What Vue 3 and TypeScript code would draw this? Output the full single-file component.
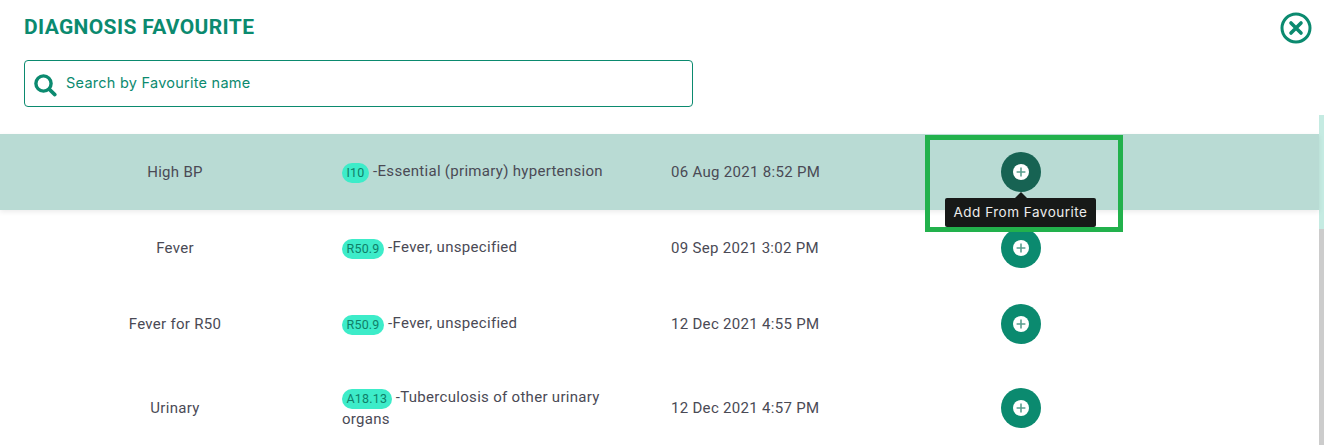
<template>
  <div class="dialog">
    <header class="head">
      <h2 class="title">DIAGNOSIS FAVOURITE</h2>
      <button class="close" aria-label="Close">
        <svg width="32" height="32" viewBox="0 0 32 32">
          <circle cx="16" cy="16" r="14" fill="none" stroke="#0b8a6f" stroke-width="3" />
          <path d="M11 11l10 10M21 11L11 21" fill="none" stroke="#0b8a6f" stroke-width="3.6" stroke-linecap="round" />
        </svg>
      </button>
    </header>

    <div class="search">
      <svg class="search-icon" width="24" height="24" viewBox="0 0 24 24">
        <circle cx="10.5" cy="10.5" r="7.6" fill="none" stroke="#0b8a6f" stroke-width="3.4" />
        <path d="M16.4 16.4l5.4 5.2" fill="none" stroke="#0b8a6f" stroke-width="3.6" stroke-linecap="round" />
      </svg>
      <span class="placeholder">Search by Favourite name</span>
    </div>

    <div class="body">
      <div class="list">
        <div
          v-for="(row, index) in rows"
          :key="row.name"
          class="row"
          :class="{ active: index === 0, tall: row.tall }"
        >
          <div class="name">{{ row.name }}</div>
          <div class="diag"><span class="code">{{ row.code }}</span> -{{ row.text }}</div>
          <div class="date">{{ row.date }}</div>
          <div class="action">
            <button class="add" aria-label="Add">
              <svg width="16" height="16" viewBox="0 0 16 16">
                <circle cx="8" cy="8" r="8" fill="#fff" />
                <path d="M8 3.6v8.8M3.6 8h8.8" stroke="#5a9f8f" stroke-width="1.6" />
              </svg>
            </button>
            <div v-if="index === 0" class="tooltip">Add From Favourite</div>
            <div v-if="index === 0" class="marker"></div>
          </div>
        </div>
      </div>
      <div class="scrollbar"><div class="thumb"></div></div>
    </div>
  </div>
</template>

<script setup lang="ts">
interface Row {
  name: string
  code: string
  text: string
  date: string
  tall?: boolean
}

const rows: Row[] = [
  { name: 'High BP', code: 'I10', text: 'Essential (primary) hypertension', date: '06 Aug 2021 8:52 PM' },
  { name: 'Fever', code: 'R50.9', text: 'Fever, unspecified', date: '09 Sep 2021 3:02 PM' },
  { name: 'Fever for R50', code: 'R50.9', text: 'Fever, unspecified', date: '12 Dec 2021 4:55 PM' },
  { name: 'Urinary', code: 'A18.13', text: 'Tuberculosis of other urinary organs', date: '12 Dec 2021 4:57 PM', tall: true }
]
</script>

<style>
html, body {
  margin: 0;
  background: #fff;
  overflow: hidden;
}
</style>

<style scoped>
.dialog {
  width: 1331px;
  height: 445px;
  overflow: hidden;
  font-family: Roboto, "Liberation Sans", sans-serif;
  color: #4a4a55;
}
.head {
  display: flex;
  justify-content: space-between;
  align-items: flex-start;
  height: 60px;
  padding: 12px 19px 0 24px;
  box-sizing: border-box;
}
.title {
  margin: 3px 0 0;
  font-size: 21px;
  line-height: 24px;
  font-weight: 700;
  color: #0b8a6f;
  letter-spacing: 0.35px;
}
.close {
  padding: 0;
  border: 0;
  background: none;
  display: block;
  height: 32px;
}
.search {
  display: flex;
  align-items: center;
  gap: 9px;
  width: 669px;
  height: 47px;
  margin-left: 24px;
  padding: 0 0 3px 8px;
  box-sizing: border-box;
  border: 1px solid #0b8a6f;
  border-radius: 4px;
}
.search-icon {
  margin-top: 6px;
}
.placeholder {
  font-family: Inter, "Open Sans", sans-serif;
  font-size: 14.5px;
  color: #0b8a6f;
  letter-spacing: 0.25px;
}
.body {
  display: flex;
  margin-top: 8px;
  padding-right: 7px;
  height: 330px;
}
.list {
  flex: 1;
  padding-top: 19px;
}
.row {
  display: grid;
  grid-template-columns: 342px 329px 250px 200px;
  align-items: center;
  height: 76px;
  font-size: 15px;
  line-height: 21px;
  letter-spacing: 0.3px;
}
.row.tall {
  height: 92px;
}
.row.active {
  background: #b9dbd4;
  box-shadow: 0 2px 5px rgba(0, 0, 0, 0.08);
  position: relative;
  z-index: 1;
}
.name,
.date {
  padding-top: 1px;
}
.name {
  text-align: center;
  padding-left: 8px;
}
.diag {
  padding-right: 40px;
}
.code {
  display: inline-block;
  padding: 0 4.5px;
  border-radius: 10px;
  background: #3decc9;
  color: #0f7f68;
  font-size: 12.5px;
  line-height: 20px;
  letter-spacing: 0.2px;
  vertical-align: -1px;
}
.action {
  position: relative;
  display: flex;
  justify-content: center;
}
.add {
  display: flex;
  align-items: center;
  justify-content: center;
  width: 40px;
  height: 40px;
  padding: 0;
  border: 0;
  border-radius: 50%;
  background: #0b8a6f;
}
.active .add {
  background: #176353;
}
.tooltip {
  position: absolute;
  top: 46px;
  left: 24px;
  width: 151px;
  height: 29px;
  border-radius: 2px;
  background: #171918;
  color: #ececec;
  font-family: Inter, "Open Sans", sans-serif;
  font-size: 13.5px;
  line-height: 29px;
  text-align: center;
  letter-spacing: 0.5px;
}
.tooltip::before {
  content: "";
  position: absolute;
  top: -6px;
  left: 70px;
  border: 6px solid transparent;
  border-top: 0;
  border-bottom-color: #171918;
}
.marker {
  position: absolute;
  top: -17px;
  left: 4px;
  width: 198px;
  height: 97px;
  box-sizing: border-box;
  border: 5px solid #22b14c;
}
.scrollbar {
  width: 5px;
  background: #cccccc;
}
.thumb {
  height: 114px;
  background: #c5ebe2;
}
</style>
